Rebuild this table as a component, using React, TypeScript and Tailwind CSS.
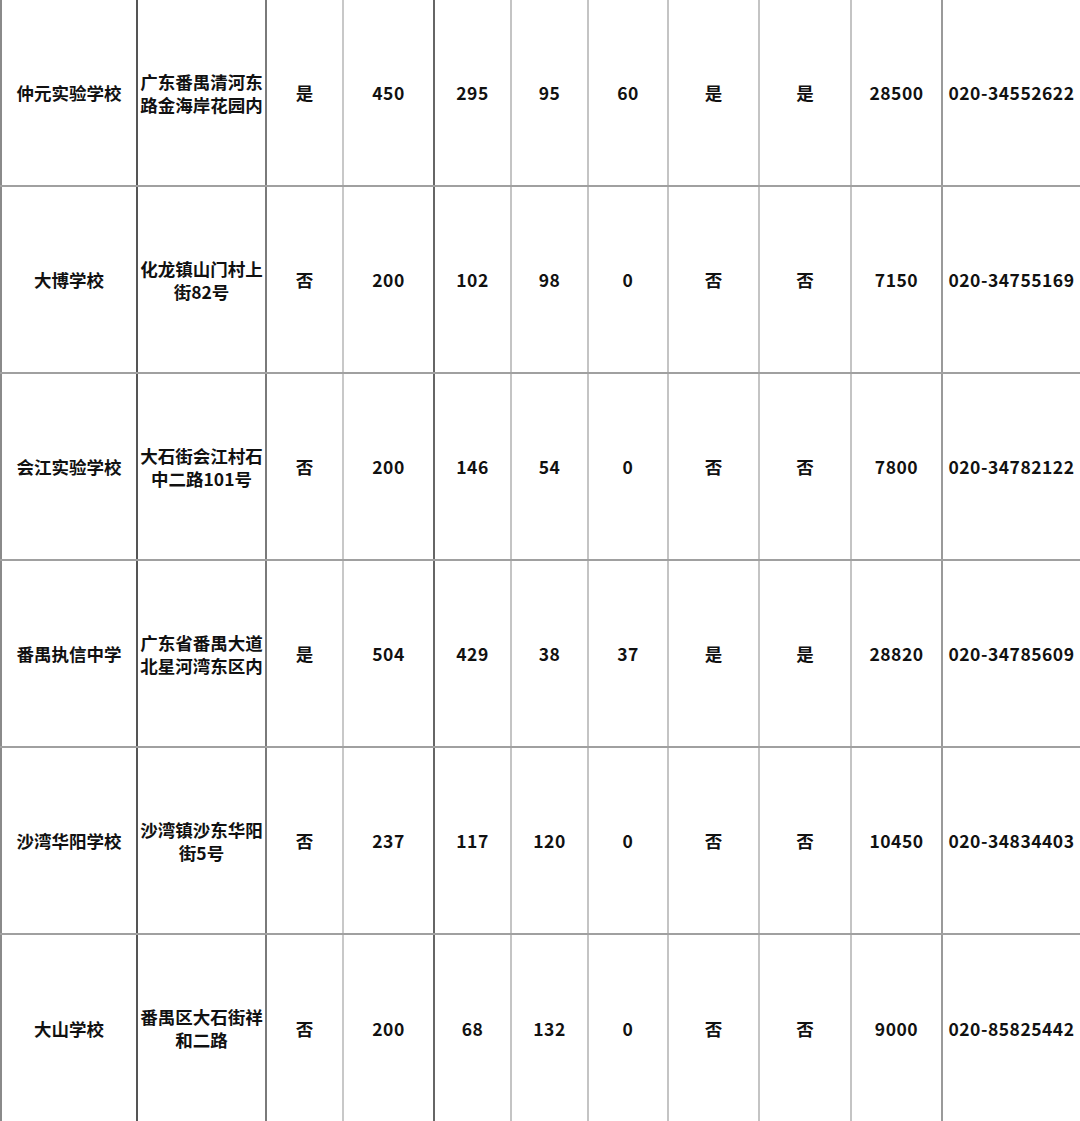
import React from "react"

// left border colour of each column (darker lines in the scan)
const lineColors = [
  "border-l-[#8a8a8a]",
  "border-l-[#555555]",
  "border-l-[#7a7a7a]",
  "border-l-[#c8c8c8]",
  "border-l-[#666666]",
  "border-l-[#c4c4c4]",
  "border-l-[#c4c4c4]",
  "border-l-[#c4c4c4]",
  "border-l-[#c4c4c4]",
  "border-l-[#c4c4c4]",
  "border-l-[#9a9a9a]",
]

const rows: string[][] = [
  ["仲元实验学校", "广东番禺清河东\n路金海岸花园内", "是", "450", "295", "95", "60", "是", "是", "28500", "020-34552622"],
  ["大博学校", "化龙镇山门村上\n街82号", "否", "200", "102", "98", "0", "否", "否", "7150", "020-34755169"],
  ["会江实验学校", "大石街会江村石\n中二路101号", "否", "200", "146", "54", "0", "否", "否", "7800", "020-34782122"],
  ["番禺执信中学", "广东省番禺大道\n北星河湾东区内", "是", "504", "429", "38", "37", "是", "是", "28820", "020-34785609"],
  ["沙湾华阳学校", "沙湾镇沙东华阳\n街5号", "否", "237", "117", "120", "0", "否", "否", "10450", "020-34834403"],
  ["大山学校", "番禺区大石街祥\n和二路", "否", "200", "68", "132", "0", "否", "否", "9000", "020-85825442"],
]

const isNumber = (s: string) => /^[0-9-]+$/.test(s)

export default function App() {
  return (
    <div className="w-[1080px] h-[1121px] bg-white overflow-hidden flex flex-col text-[#111] font-bold font-['Noto_Sans_CJK_SC','Noto_Sans',sans-serif]">
      {rows.map((row, ri) => (
        <div
          key={ri}
          className={
            "grid grid-cols-[136px_129px_77px_91px_77px_77px_80px_91px_92px_91px_139px] " +
            (ri < rows.length - 1 ? "h-[187px] shrink-0 border-b-2 border-b-[#a0a0a0]" : "flex-1")
          }
        >
          {row.map((cell, ci) => (
            <div
              key={ci}
              className={
                "flex items-center justify-center text-center border-l-2 text-[17.5px] leading-[23px] whitespace-pre-line " +
                lineColors[ci] +
                (isNumber(cell) ? " tracking-[0.5px]" : "")
              }
            >
              {cell}
            </div>
          ))}
        </div>
      ))}
    </div>
  )
}
